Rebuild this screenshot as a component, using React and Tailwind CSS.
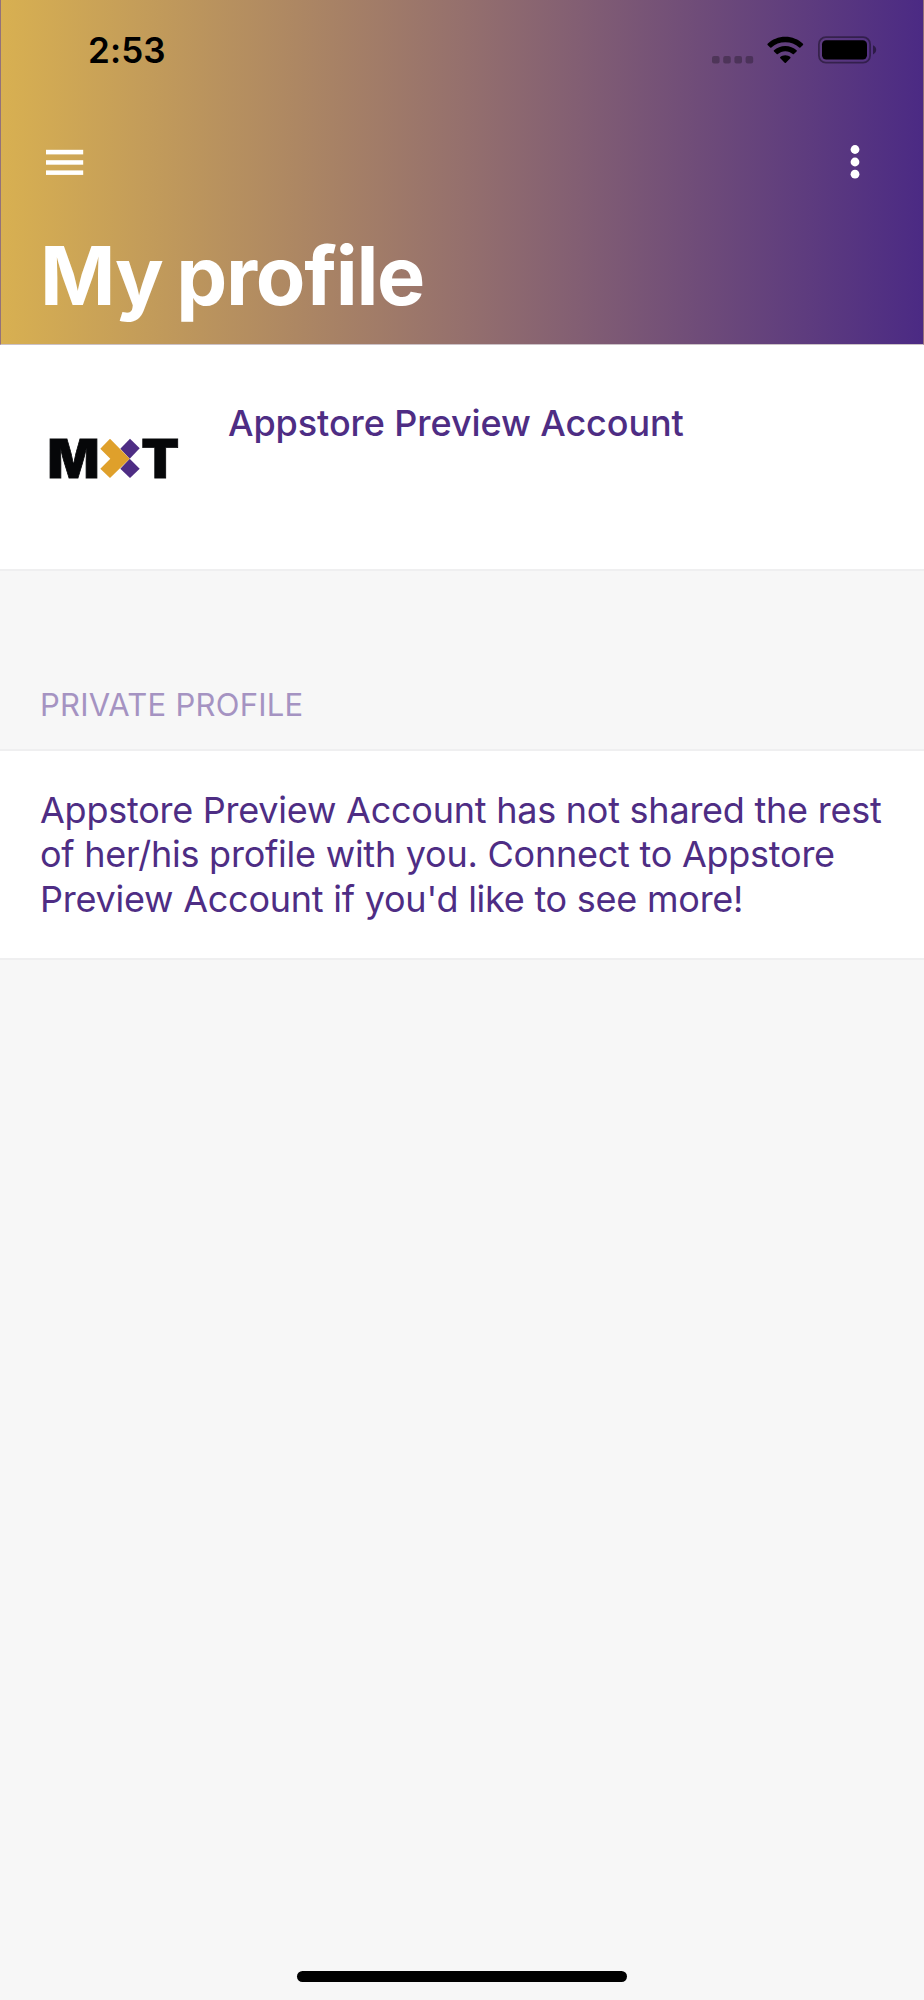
import React from 'react';

const profile = {
  name: 'Appstore Preview Account',
  isPrivate: true
};

const StatusBar = () => (
  <div className="flex items-center justify-between h-[100px] pl-[87px] pr-[46px]">
    <span className="text-[35px] leading-none font-semibold text-black tracking-[0.1px] pt-px">2:53</span>
    <div className="flex items-center">
      {/* No signal dots */}
      <svg width="42" height="28" viewBox="0 0 42 28" className="mr-[13px]" fill="#000" fillOpacity="0.27">
        <rect x="0" y="20" width="7.6" height="7.4" rx="2" />
        <rect x="11.2" y="20" width="7.6" height="7.4" rx="2" />
        <rect x="22.4" y="20" width="7.6" height="7.4" rx="2" />
        <rect x="33.6" y="20" width="7.6" height="7.4" rx="2" />
      </svg>

      {/* Wifi */}
      <svg width="37" height="28" viewBox="0 0 37 28" className="mr-[14px]" fill="#000">
        <path d="M18.3 0.8C25.2 0.8 31.4 3.5 36 7.7Q36.5 8.3 36 8.9L33.4 11.5Q32.8 12 32.2 11.5C28.5 8.2 23.7 6.3 18.3 6.3S8.1 8.2 4.4 11.5Q3.8 12 3.2 11.5L0.6 8.9Q0.1 8.3 0.6 7.7C5.2 3.5 11.4 0.8 18.3 0.8Z" />
        <path d="M18.3 9.9C22.7 9.9 26.6 11.6 29.6 14.3Q30.2 14.9 29.6 15.5L26.9 18.1Q26.3 18.6 25.7 18.1C23.7 16.4 21.2 15.3 18.3 15.3S12.9 16.4 10.9 18.1Q10.3 18.6 9.7 18.1L7 15.5Q6.4 14.9 7 14.3C10 11.6 13.9 9.9 18.3 9.9Z" />
        <path d="M18.3 19.3C20.3 19.3 22.1 20 23.3 21.1Q23.9 21.7 23.3 22.3L18.9 26.8Q18.3 27.3 17.7 26.8L13.3 22.3Q12.7 21.7 13.3 21.1C14.5 20 16.3 19.3 18.3 19.3Z" />
      </svg>

      {/* Battery */}
      <svg width="59" height="28" viewBox="0 0 59 28">
        <rect x="0.9" y="1.2" width="51.2" height="25.4" rx="7" fill="none" stroke="#000" strokeOpacity="0.4" strokeWidth="1.8" />
        <rect x="4" y="4.2" width="45" height="19.2" rx="4.2" fill="#000" />
        <path d="M55 9.2C57 10 58.2 11.8 58.2 13.8S57 17.6 55 18.4Z" fill="#000" fillOpacity="0.45" />
      </svg>
    </div>
  </div>
);

const Header = ({ title }) => (
  <header className="h-[345px] bg-[linear-gradient(90deg,#d8b051_0%,#95706d_50%,#4b2a84_100%)] border-x border-b border-x-[#94727a] border-b-[#cbc1c6]">
    <StatusBar />
    <div className="flex items-center justify-between h-[124px] pl-[45px] pr-[63px]">
      <button aria-label="Menu">
        <svg width="38" height="26" viewBox="0 0 38 26" fill="#fff">
          <rect x="0" y="0.8" width="37.2" height="4.6" />
          <rect x="0" y="11.2" width="37.2" height="4.5" />
          <rect x="0" y="21.4" width="37.2" height="4.5" />
        </svg>
      </button>
      <button aria-label="More">
        <svg width="10" height="36" viewBox="0 0 10 36" fill="#fff">
          <circle cx="5" cy="5.5" r="4.4" />
          <circle cx="5" cy="18" r="4.4" />
          <circle cx="5" cy="30.2" r="4.4" />
        </svg>
      </button>
    </div>
    <h1 className="pl-[39px] text-[81px] leading-[104px] font-bold text-white tracking-[-1.3px] [word-spacing:-4px]">{title}</h1>
  </header>
);

const Logo = () => (
  <svg width="136" height="84" viewBox="0 -12 136 84">
    <text x="1.5" y="49" fontSize="54" fontWeight="900" fill="#060709" stroke="#060709" strokeWidth="0.8" textLength="52" lengthAdjust="spacingAndGlyphs">M</text>
    <polygon points="84,9.7 93.7,19.3 83.7,29.7 74.3,19.7" fill="#4e2d84" />
    <polygon points="83.7,29.7 93.7,39.7 84,49 74.3,39.7" fill="#4e2d84" />
    <polygon points="54.3,19.7 64,9.7 83.7,29.7 64,49 54.3,39.7 64.3,29.7" fill="#dfa02b" />
    <text x="95.3" y="49" fontSize="54" fontWeight="900" fill="#060709" stroke="#060709" strokeWidth="0.8" textLength="38" lengthAdjust="spacingAndGlyphs">T</text>
  </svg>
);

const App = () => {
  return (
    <div className="min-h-[2000px] flex flex-col bg-[#f7f7f7] font-['Inter',sans-serif] text-[#4e2d84]">
      <Header title="My profile" />

      {/* Profile card */}
      <section className="flex items-start h-[226px] bg-white border-b-2 border-[#efeff0] pl-[46px]">
        <div className="pt-[72px]">
          <Logo />
        </div>
        <h2 className="pl-[46px] pt-[56px] text-[36px] leading-[44px] font-medium tracking-[-0.08px] whitespace-nowrap">
          {profile.name}
        </h2>
      </section>

      {/* Private notice */}
      {profile.isPrivate && (
        <section>
          <h3 className="h-[178px] pt-[114px] pl-[40px] text-[31px] leading-[40px] uppercase tracking-[0.25px] text-[#a593c2]">
            Private profile
          </h3>
          <div className="h-[211px] bg-white border-y-2 border-[#efeff0] pt-[37px] pl-[40px] text-[36px] leading-[44.3px] tracking-[-0.24px] whitespace-nowrap">
            <p>
              {profile.name} has not shared the rest<br />
              of her/his profile with you. Connect to Appstore<br />
              Preview Account if you'd like to see more!
            </p>
          </div>
        </section>
      )}

      {/* Home indicator */}
      <div className="mt-auto mb-[18px] mx-auto w-[330px] h-[11px] rounded-full bg-black" />
    </div>
  );
};

export default App;
